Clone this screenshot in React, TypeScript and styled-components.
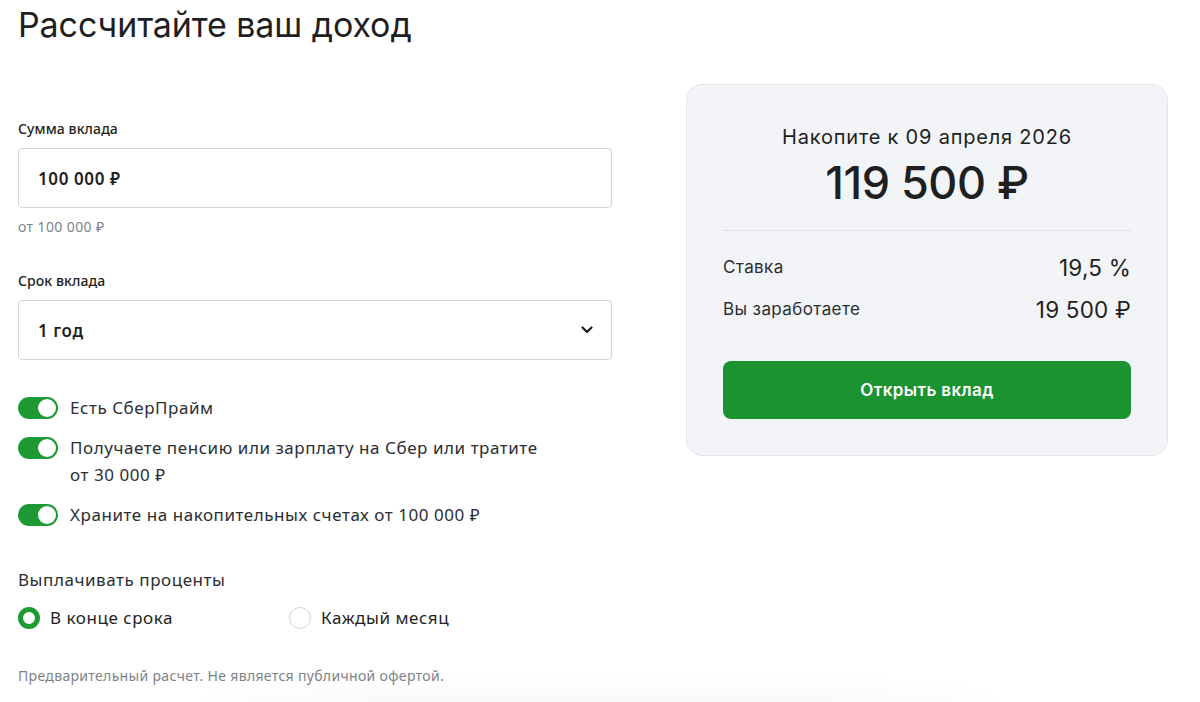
import React from "react";
import styled, { createGlobalStyle } from "styled-components";

const GlobalStyle = createGlobalStyle`
  html, body {
    margin: 0;
    padding: 0;
    background: #ffffff;
    overflow: hidden;
  }
  body {
    font-family: "Noto Sans", "Open Sans", sans-serif;
    color: #1f1f22;
  }
`;

const Page = styled.div`
  width: 1200px;
  height: 702px;
  padding: 0 18px;
  box-sizing: border-box;
  position: relative;
  overflow: hidden;
`;

const Title = styled.h1`
  margin: 0;
  padding-top: 4px;
  font-family: Inter, "Noto Sans", sans-serif;
  font-weight: 400;
  font-size: 34px;
  line-height: 42px;
  letter-spacing: -0.1px;
  color: #1f1f22;
`;

const Layout = styled.div`
  display: flex;
  align-items: flex-start;
  gap: 74px;
  margin-top: 38px;
`;

const Form = styled.div`
  width: 594px;
  display: flex;
  flex-direction: column;
`;

const Label = styled.div<{ $top?: number }>`
  font-size: 14px;
  line-height: 20px;
  font-weight: 500;
  letter-spacing: 0.1px;
  color: #1f1f22;
  margin-bottom: 9px;
  margin-top: ${(p) => p.$top ?? 0}px;
`;

const Field = styled.div`
  height: 60px;
  box-sizing: border-box;
  border: 1px solid #d3d5d8;
  border-radius: 4px;
  display: flex;
  align-items: center;
  justify-content: space-between;
  padding: 0 18px 0 19px;
  font-size: 17px;
  font-weight: 600;
  letter-spacing: 0.6px;
  color: #1f1f22;
`;

const Hint = styled.div`
  margin-top: 9px;
  font-size: 14px;
  line-height: 20px;
  letter-spacing: 0.4px;
  color: #7d838a;
`;

const Toggles = styled.div`
  display: flex;
  flex-direction: column;
  gap: 14px;
  margin-top: 35px;
`;

const ToggleRow = styled.div`
  display: flex;
  align-items: flex-start;
  gap: 12px;
`;

const Track = styled.div`
  flex: none;
  width: 40px;
  height: 22px;
  border-radius: 11px;
  background: #1e9a35;
  position: relative;
  margin-top: 2px;
  &::after {
    content: "";
    position: absolute;
    right: 2px;
    top: 2px;
    width: 18px;
    height: 18px;
    border-radius: 50%;
    background: #ffffff;
  }
`;

const ToggleText = styled.div`
  font-size: 17px;
  line-height: 27px;
  letter-spacing: 0.55px;
  color: #2b2d33;
  margin-top: -1px;
  max-width: 485px;
`;

const SectionTitle = styled.div`
  margin-top: 40px;
  font-size: 17px;
  line-height: 24px;
  letter-spacing: 0.55px;
  color: #2b2d33;
`;

const Radios = styled.div`
  display: flex;
  margin-top: 14px;
`;

const RadioOption = styled.div`
  display: flex;
  align-items: center;
  gap: 10px;
  width: 271px;
  font-size: 17px;
  line-height: 24px;
  letter-spacing: 0.55px;
  color: #1f1f22;
`;

const RadioDot = styled.div<{ $checked?: boolean }>`
  width: 22px;
  height: 22px;
  box-sizing: border-box;
  border-radius: 50%;
  border: ${(p) => (p.$checked ? "5px solid #1e9a35" : "1px solid #d3d5d8")};
  background: #ffffff;
`;

const Disclaimer = styled.div`
  margin-top: 36px;
  font-size: 14px;
  line-height: 20px;
  letter-spacing: 0.33px;
  color: #7d838a;
`;

const Card = styled.div`
  width: 482px;
  box-sizing: border-box;
  background: #f2f4f7;
  border: 1px solid #e4e6ea;
  border-radius: 16px;
  padding: 38px 36px 36px;
  display: flex;
  flex-direction: column;
`;

const CardCaption = styled.div`
  text-align: center;
  font-family: Inter, "Noto Sans", sans-serif;
  font-size: 20px;
  line-height: 28px;
  letter-spacing: 0.8px;
  color: #1f1f22;
`;

const BigSum = styled.div`
  text-align: center;
  font-family: Inter, "Noto Sans", sans-serif;
  font-size: 45px;
  font-weight: 500;
  line-height: 56px;
  letter-spacing: -0.5px;
  color: #1f1f22;
  margin-top: 4px;
`;

const Divider = styled.div`
  height: 1px;
  background: #e0e2e6;
  margin: 19px 0 15px;
`;

const InfoRow = styled.div`
  display: flex;
  justify-content: space-between;
  align-items: center;
  height: 42px;
`;

const InfoLabel = styled.div`
  font-family: Inter, "Noto Sans", sans-serif;
  font-size: 17px;
  letter-spacing: 0.4px;
  color: #2b2d33;
`;

const InfoValue = styled.div`
  font-family: Inter, "Noto Sans", sans-serif;
  font-size: 22.5px;
  letter-spacing: 0.2px;
  color: #1f1f22;
`;

const OpenButton = styled.button`
  margin-top: 31px;
  height: 58px;
  border: none;
  border-radius: 8px;
  background: #1a9330;
  color: #ffffff;
  font-family: Inter, "Noto Sans", sans-serif;
  font-size: 17px;
  font-weight: 600;
  letter-spacing: 0.4px;
  cursor: pointer;
`;

const BottomShade = styled.div`
  position: absolute;
  left: 200px;
  right: 200px;
  bottom: -40px;
  height: 40px;
  border-radius: 50%;
  box-shadow: 0 0 40px rgba(0, 0, 0, 0.06);
`;

const Chevron = () => (
  <svg width="12" height="8" viewBox="0 0 12 8" fill="none">
    <path
      d="M1.5 1.5 L6 6 L10.5 1.5"
      stroke="#1f1f22"
      strokeWidth="2.2"
      strokeLinecap="round"
      strokeLinejoin="round"
    />
  </svg>
);

const toggles = [
  "Есть СберПрайм",
  "Получаете пенсию или зарплату на Сбер или тратите от 30 000 ₽",
  "Храните на накопительных счетах от 100 000 ₽",
];

const App = () => {
  return (
    <Page>
      <GlobalStyle />
      <Title>Рассчитайте ваш доход</Title>
      <Layout>
        <Form>
          <Label $top={35}>Сумма вклада</Label>
          <Field>100 000 ₽</Field>
          <Hint>от 100 000 ₽</Hint>
          <Label $top={34}>Срок вклада</Label>
          <Field>
            1 год
            <Chevron />
          </Field>
          <Toggles>
            {toggles.map((t) => (
              <ToggleRow key={t}>
                <Track />
                <ToggleText>{t}</ToggleText>
              </ToggleRow>
            ))}
          </Toggles>
          <SectionTitle>Выплачивать проценты</SectionTitle>
          <Radios>
            <RadioOption>
              <RadioDot $checked />
              В конце срока
            </RadioOption>
            <RadioOption>
              <RadioDot />
              Каждый месяц
            </RadioOption>
          </Radios>
          <Disclaimer>Предварительный расчет. Не является публичной офертой.</Disclaimer>
        </Form>
        <Card>
          <CardCaption>Накопите к 09 апреля 2026</CardCaption>
          <BigSum>119 500 ₽</BigSum>
          <Divider />
          <InfoRow>
            <InfoLabel>Ставка</InfoLabel>
            <InfoValue>19,5 %</InfoValue>
          </InfoRow>
          <InfoRow>
            <InfoLabel>Вы заработаете</InfoLabel>
            <InfoValue>19 500 ₽</InfoValue>
          </InfoRow>
          <OpenButton>Открыть вклад</OpenButton>
        </Card>
      </Layout>
      <BottomShade />
    </Page>
  );
};

export default App;
